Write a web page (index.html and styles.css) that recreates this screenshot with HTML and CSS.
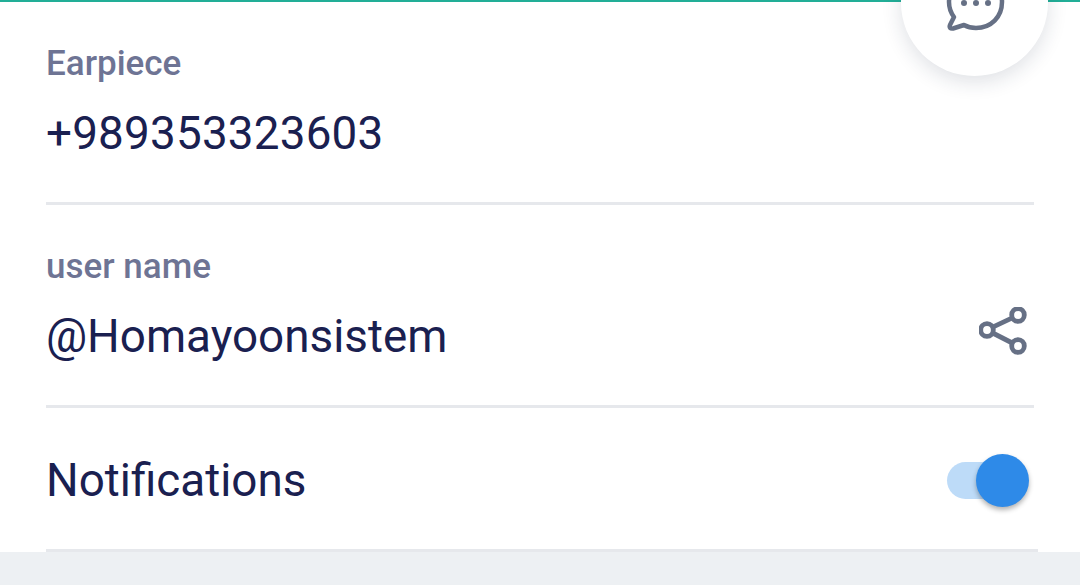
FILE: index.html
```html
<!DOCTYPE html>
<html lang="en">
<head>
    <meta charset="UTF-8">
    <meta name="viewport" content="width=device-width, initial-scale=1.0">
    <title>Profile</title>
    <link rel="stylesheet" href="styles.css">
</head>
<body>
    <div class="screen">
        <div class="top-line"></div>

        <button class="fab" type="button">
            <svg class="fab-icon" viewBox="0 0 60 60" fill="none">
                <path d="M30 2 C14 2 3 13 3 27 C3 33 5 38 8 42 L4 50 C3 52.500 4.500 54 7 53.500 L18 50 C21.500 52 25.500 53 30 53 C45 53 56 42 56 27 C56 13 45 2 30 2 Z" stroke="#667085" stroke-width="4.500" stroke-linejoin="round"/>
                <circle cx="18" cy="28" r="3" fill="#667085"/>
                <circle cx="30" cy="28" r="3" fill="#667085"/>
                <circle cx="42" cy="28" r="3" fill="#667085"/>
            </svg>
        </button>

        <div class="info-list">
            <div class="row row-first">
                <div class="row-label">Earpiece</div>
                <div class="row-value row-phone">+989353323603</div>
            </div>
            <div class="row row-second">
                <div>
                    <div class="row-label">user name</div>
                    <div class="row-value">@Homayoonsistem</div>
                </div>
                <svg class="share-icon" viewBox="0 0 48 48" fill="none" stroke="#667085" stroke-width="4.800">
                    <circle cx="39" cy="8" r="6.300"/>
                    <circle cx="8" cy="23" r="6.300"/>
                    <circle cx="39" cy="39" r="6.300"/>
                    <path d="M13.700 20.200 L33.300 10.800 M13.700 26 L33.300 36"/>
                </svg>
            </div>
            <div class="row row-last">
                <div class="row-title">Notifications</div>
                <div class="switch">
                    <div class="switch-track"></div>
                    <div class="switch-knob"></div>
                </div>
            </div>
        </div>
        <div class="footer"></div>
    </div>
</body>
</html>
```

FILE: styles.css
```css
html, body {
    margin: 0;
    padding: 0;
}
body {
    font-family: Roboto, "Liberation Sans", sans-serif;
    background-color: #fff;
}
.screen {
    position: relative;
    width: 1080px;
    height: 585px;
    overflow: hidden;
    display: flex;
    flex-direction: column;
}
.top-line {
    height: 2px;
    background-color: #22ae97;
}
.fab {
    position: absolute;
    top: -71px;
    left: 901px;
    width: 147px;
    height: 147px;
    padding: 0;
    border: none;
    border-radius: 50%;
    background-color: #fff;
    box-shadow: 0 6px 20px rgba(30,40,70,0.14);
}
.fab-icon {
    position: absolute;
    left: 44.500px;
    top: 46px;
    width: 60px;
    height: 60px;
}
.info-list {
    flex: 1;
    padding-left: 46px;
}
.row {
    box-sizing: border-box;
    width: 988px;
    border-bottom: 3px solid #e6e8ec;
}
.row-first {
    height: 203px;
    padding-top: 42px;
}
.row-second {
    height: 203px;
    padding-top: 42px;
    padding-right: 7px;
    display: flex;
    justify-content: space-between;
    align-items: flex-start;
}
.row-last {
    height: 144px;
    width: 992px;
    padding-right: 9px;
    display: flex;
    justify-content: space-between;
    align-items: center;
}
.row-label {
    font-size: 35px;
    line-height: 40px;
    font-weight: 500;
    color: #6e7494;
}
.row-value {
    margin-top: 20px;
    font-size: 45.800px;
    line-height: 60px;
    color: #1a2050;
}
.row-phone {
    letter-spacing: 0.200px;
}
.row-title {
    margin-top: 4px;
    font-size: 45.800px;
    line-height: 60px;
    color: #1a2050;
}
.share-icon {
    width: 48px;
    height: 48px;
    margin-top: 60px;
}
.switch {
    position: relative;
    width: 82px;
    height: 53px;
    margin-top: 4px;
}
.switch-track {
    position: absolute;
    left: 0;
    top: 8px;
    width: 70px;
    height: 37px;
    border-radius: 19px;
    background-color: #bddbf8;
}
.switch-knob {
    position: absolute;
    right: 0;
    top: 0;
    width: 53px;
    height: 53px;
    border-radius: 50%;
    background-color: #2e8ae8;
    box-shadow: 0 3px 5px rgba(0,0,0,0.3);
}
.footer {
    height: 33px;
    background-color: #edf0f3;
}
```
